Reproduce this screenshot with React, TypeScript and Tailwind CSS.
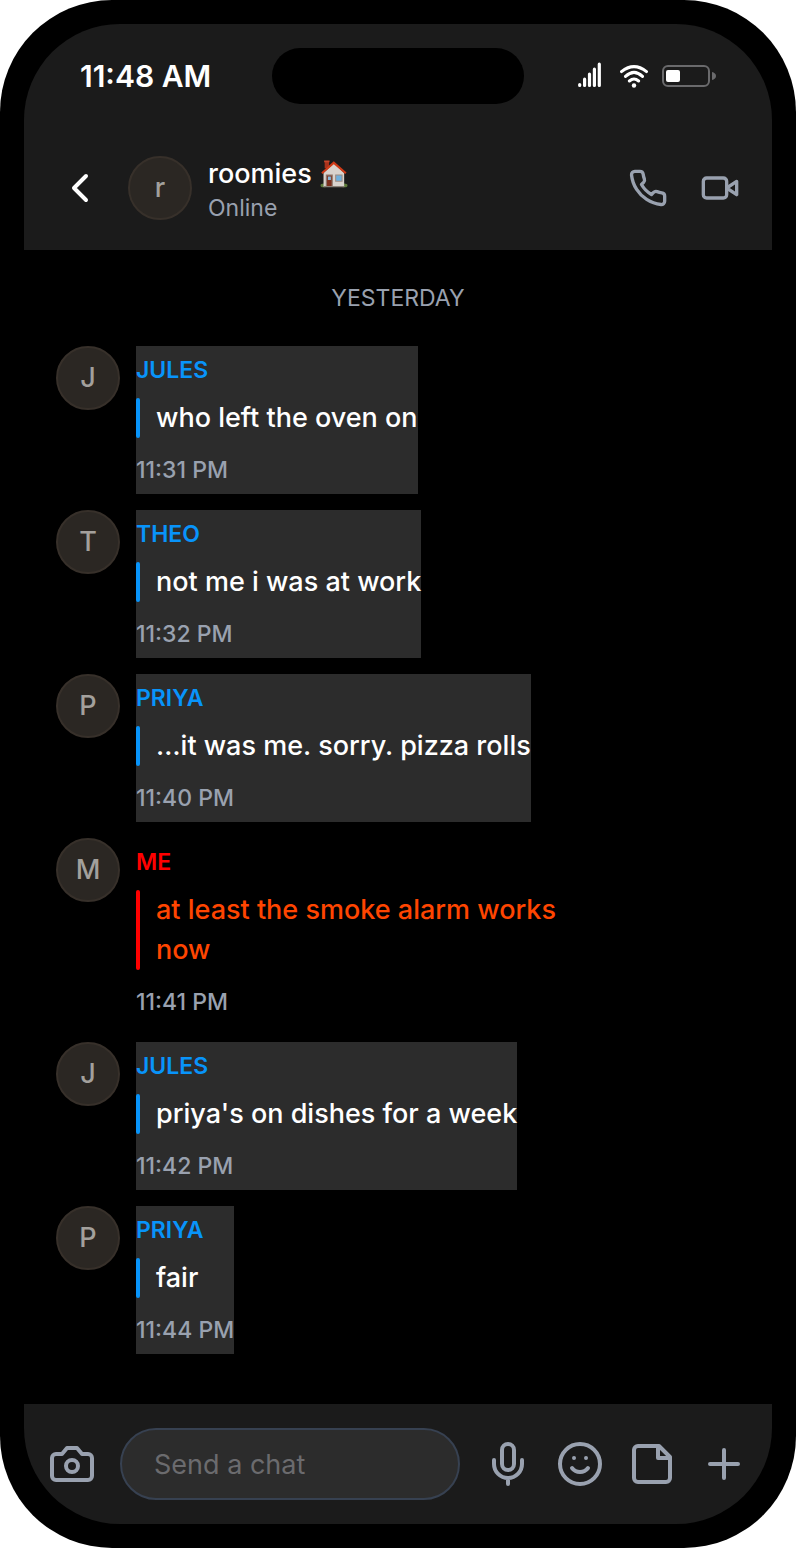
import type { ReactNode } from 'react';

type Message = {
  id: number;
  author: string;
  text: string;
  time: string;
  mine?: boolean;
};

const messages: Message[] = [
  { id: 1, author: 'Jules', text: 'who left the oven on', time: '11:31 PM' },
  { id: 2, author: 'Theo', text: 'not me i was at work', time: '11:32 PM' },
  { id: 3, author: 'Priya', text: '…it was me. sorry. pizza rolls', time: '11:40 PM' },
  { id: 4, author: 'Me', text: 'at least the smoke alarm works now', time: '11:41 PM', mine: true },
  { id: 5, author: 'Jules', text: "priya's on dishes for a week", time: '11:42 PM' },
  { id: 6, author: 'Priya', text: 'fair', time: '11:44 PM' },
];

function Icon({ className, children }: { className: string; children: ReactNode }) {
  return (
    <svg
      viewBox="0 0 24 24"
      fill="none"
      stroke="currentColor"
      strokeWidth="2"
      strokeLinecap="round"
      strokeLinejoin="round"
      className={className}
      aria-hidden="true"
    >
      {children}
    </svg>
  );
}

function IconButton({ label, children }: { label: string; children: ReactNode }) {
  return (
    <button type="button" aria-label={label} className="shrink-0 text-gray-400">
      {children}
    </button>
  );
}

function HouseEmoji() {
  return (
    <svg viewBox="0 0 27 27" className="h-7 w-7 shrink-0" role="img" aria-label="house">
      <ellipse cx="3.5" cy="24.5" rx="3" ry="1.8" fill="#5d7a3a" />
      <ellipse cx="23.5" cy="24.5" rx="3" ry="1.8" fill="#5d7a3a" />
      <path d="M4.5 1h4.2v7H4.5z" fill="#a8321c" />
      <path d="M4 .6h5.2v1.6H4z" fill="#c8462b" />
      <path d="M3.4 12.5 13.5 3l9.8 9.5V26H3.4z" fill="#d9d3cd" />
      <path d="M13.3 1.2 25.6 12l-1.3 1.5L13.3 4.2 2.4 13.5 1.2 12z" fill="#cf3a17" />
      <path d="M5.6 14h6.8v12H5.6z" fill="#8f776b" />
      <path d="M6.8 15.2h4.4V26H6.8z" fill="#7d2f1d" />
      <path d="M7.6 16h2.9v3.4H7.6z" fill="#86b9dc" />
      <path d="M14.6 14h7.2v7h-7.2z" fill="#9c8a80" />
      <path d="M15.6 15h5.2v5h-5.2z" fill="#6fb0dd" />
      <path d="M3.4 25h20v1.2h-20z" fill="#8b8279" />
    </svg>
  );
}

function Avatar({ initial }: { initial: string }) {
  return (
    <div className="flex h-16 w-16 shrink-0 items-center justify-center rounded-full border-2 border-[#37302a] bg-[#2b2723] text-[27px] font-medium text-[#a3a09c]">
      {initial}
    </div>
  );
}

function StatusBar() {
  return (
    <div className="grid grid-cols-[1fr_252px_1fr] items-center pt-6">
      <span className="pl-14 text-[30px] leading-14 font-semibold text-white">11:48 AM</span>
      <div className="h-14 rounded-full bg-black" />
      <div className="flex items-center justify-end gap-3 pr-14 text-white">
        <svg viewBox="0 0 24 28" className="mr-1.5 h-7 w-6" stroke="currentColor" strokeWidth="3.2" strokeLinecap="round" aria-label="Signal" role="img">
          <path d="M1.7 22.6v.9M6.6 17.2v6.3M11.5 12.2v11.3M16.4 7.2v16.3M21.3 2.2v21.3" />
        </svg>
        <svg viewBox="0 0 30 26" className="h-[26px] w-[30px]" fill="none" stroke="currentColor" strokeWidth="3" strokeLinecap="round" aria-label="Wi-Fi" role="img">
          <path d="M1.5 8.6Q14-1.4 26.5 8.6M5.5 13.4Q14 5.2 22.5 13.4M9.4 18Q14 14 18.6 18" />
          <circle cx="14" cy="22.5" r="2.2" fill="currentColor" stroke="none" />
        </svg>
        <svg viewBox="0 0 54 22" className="h-[22px] w-[54px]" aria-label="Battery" role="img">
          <rect x="1" y="1" width="46" height="20" rx="5" fill="none" stroke="#6a6a6c" strokeWidth="2" />
          <rect x="4" y="5" width="14" height="12" rx="2" fill="white" />
          <path d="M50 7c2.4.6 4 2 4 4s-1.6 3.4-4 4z" fill="#6a6a6c" />
        </svg>
      </div>
    </div>
  );
}

function Header() {
  return (
    <header className="bg-[#1b1b1b] pb-6">
      <StatusBar />
      <div className="flex items-center gap-4 px-8 pt-[46px]">
        <button type="button" aria-label="Back" className="mr-2 shrink-0 text-white">
          <Icon className="h-12 w-12">
            <path d="m15 18-6-6 6-6" />
          </Icon>
        </button>
        <Avatar initial="r" />
        <div className="min-w-0 flex-1 pt-2">
          <h1 className="flex items-center gap-2 text-[27px] leading-8 font-medium text-white">
            roomies <HouseEmoji />
          </h1>
          <p className="text-[23px] leading-9 text-gray-400">Online</p>
        </div>
        <div className="flex items-center gap-8">
          <IconButton label="Voice call">
            <Icon className="h-10 w-10">
              <path d="M22 16.92v3a2 2 0 0 1-2.18 2 19.79 19.79 0 0 1-8.63-3.07 19.5 19.5 0 0 1-6-6 19.79 19.79 0 0 1-3.07-8.67A2 2 0 0 1 4.11 2h3a2 2 0 0 1 2 1.72 12.84 12.84 0 0 0 .7 2.81 2 2 0 0 1-.45 2.11L8.09 9.91a16 16 0 0 0 6 6l1.27-1.27a2 2 0 0 1 2.11-.45 12.84 12.84 0 0 0 2.81.7A2 2 0 0 1 22 16.92z" />
            </Icon>
          </IconButton>
          <IconButton label="Video call">
            <Icon className="h-10 w-10">
              <path d="m22 8-6 4 6 4V8Z" />
              <rect x="2" y="6" width="14" height="12" rx="2" />
            </Icon>
          </IconButton>
        </div>
      </div>
    </header>
  );
}

function MessageRow({ message }: { message: Message }) {
  const { author, text, time, mine } = message;

  return (
    <li className="flex max-w-3/4 items-start gap-4">
      <Avatar initial={author[0]} />
      <div className={mine ? '' : 'bg-[#2c2c2c]'}>
        <p className={`mb-1 text-[23px] leading-12 font-semibold uppercase ${mine ? 'text-[#ff0000]' : 'text-[#0894fa]'}`}>
          {author}
        </p>
        <div className="flex gap-4">
          <span className={`w-1 shrink-0 rounded-xs ${mine ? 'bg-[#ff0000]' : 'bg-[#0894fa]'}`} />
          <p className={`text-[27px] leading-10 font-medium ${mine ? 'text-[#ff4500]' : 'text-white'}`}>{text}</p>
        </div>
        <p className="mt-2 text-[23px] leading-12 font-medium whitespace-nowrap text-gray-400">{time}</p>
      </div>
    </li>
  );
}

function Composer() {
  return (
    <footer className="flex items-center gap-6 bg-[#1b1b1b] p-6">
      <IconButton label="Camera">
        <Icon className="h-12 w-12">
          <path d="M14.5 4h-5L7 7H4a2 2 0 0 0-2 2v9a2 2 0 0 0 2 2h16a2 2 0 0 0 2-2V9a2 2 0 0 0-2-2h-3l-2.5-3z" />
          <circle cx="12" cy="13" r="3" />
        </Icon>
      </IconButton>
      <input
        type="text"
        aria-label="Send a chat"
        placeholder="Send a chat"
        className="h-18 min-w-0 flex-1 rounded-full border-2 border-[#374151] bg-[#2c2c2c] px-8 text-[27px] text-white placeholder:text-[#6b6b6e] focus:outline-none"
      />
      <IconButton label="Record voice note">
        <Icon className="h-12 w-12">
          <path d="M12 2a3 3 0 0 0-3 3v7a3 3 0 0 0 6 0V5a3 3 0 0 0-3-3Z" />
          <path d="M19 10v2a7 7 0 0 1-14 0v-2M12 19v3" />
        </Icon>
      </IconButton>
      <IconButton label="Emoji">
        <Icon className="h-12 w-12">
          <circle cx="12" cy="12" r="10" />
          <path d="M8 14s1.5 2 4 2 4-2 4-2M9 9h.01M15 9h.01" />
        </Icon>
      </IconButton>
      <IconButton label="Stickers">
        <Icon className="h-12 w-12">
          <path d="M15.5 3H5a2 2 0 0 0-2 2v14c0 1.1.9 2 2 2h14a2 2 0 0 0 2-2V8.5L15.5 3Z" />
          <path d="M15 3v6h6" />
        </Icon>
      </IconButton>
      <IconButton label="More">
        <Icon className="h-12 w-12">
          <path d="M5 12h14M12 5v14" />
        </Icon>
      </IconButton>
    </footer>
  );
}

export default function App() {
  return (
    <div className="flex min-h-screen flex-col rounded-[112px] bg-black p-6 font-['Inter','Liberation_Sans',sans-serif] antialiased">
      <div className="flex flex-1 flex-col overflow-hidden rounded-[96px] bg-black">
        <Header />
        <main className="flex-1 px-8 pt-8 pb-12">
          <p className="text-center text-[23px] leading-8 text-gray-400 uppercase">Yesterday</p>
          <ul className="mt-8 flex flex-col gap-4">
            {messages.map(message => (
              <MessageRow key={message.id} message={message} />
            ))}
          </ul>
        </main>
        <Composer />
      </div>
    </div>
  );
}
